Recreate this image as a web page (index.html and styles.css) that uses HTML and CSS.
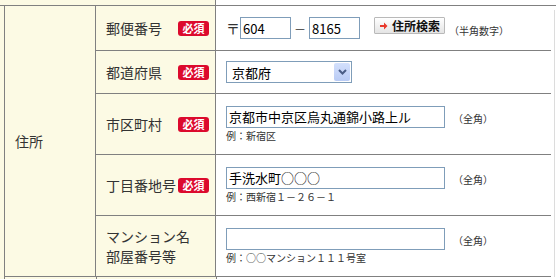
FILE: index.html
```html
<!DOCTYPE html>
<html lang="ja">
  <head>
    <meta charset="UTF-8" />
    <meta name="viewport" content="width=device-width, initial-scale=1.0" />
    <title>住所入力</title>
    <link rel="stylesheet" href="styles.css">
  </head>
  <body>
    <div class="form">
      <div class="prev">
        <div class="prev-head"></div>
        <div class="prev-body"></div>
      </div>

      <div class="addr">
        <div class="group">住所</div>

        <div class="label">郵便番号 <span class="req">必須</span></div>
        <div class="field">
          <span class="zip-mark">〒</span>
          <input type="text" class="input zip" value="604" />
          <span class="dash">－</span>
          <input type="text" class="input zip" value="8165" />
          <button type="button" class="search-btn">
            <svg width="8" height="8" viewBox="0 0 8 8">
              <path d="M0 3h4V0.5L7.5 4 4 7.5V5H0z" fill="#e8392c" />
            </svg>
            住所検索
          </button>
          <span class="note note-low">（半角数字）</span>
        </div>

        <div class="label">都道府県 <span class="req">必須</span></div>
        <div class="field">
          <div class="select">
            <span class="select-text">京都府</span>
            <span class="select-btn">
              <svg width="9" height="6" viewBox="0 0 9 6">
                <path d="M1 1l3.5 3.5L8 1" fill="none" stroke="#4a5d86" stroke-width="2" />
              </svg>
            </span>
          </div>
        </div>

        <div class="label">市区町村 <span class="req">必須</span></div>
        <div class="field">
          <div class="stack">
            <div class="line">
              <input type="text" class="input wide" value="京都市中京区烏丸通錦小路上ル" />
              <span class="note">（全角）</span>
            </div>
            <div class="example">例：新宿区</div>
          </div>
        </div>

        <div class="label">丁目番地号<span class="req">必須</span></div>
        <div class="field">
          <div class="stack">
            <div class="line">
              <input type="text" class="input wide" value="手洗水町○○○" />
              <span class="note">（全角）</span>
            </div>
            <div class="example">例：西新宿１－２６－１</div>
          </div>
        </div>

        <div class="label label-two">マンション名<br />部屋番号等</div>
        <div class="field">
          <div class="stack">
            <div class="line">
              <input type="text" class="input wide" value="" />
              <span class="note">（全角）</span>
            </div>
            <div class="example">例：○○マンション１１１号室</div>
          </div>
        </div>
      </div>

      <div class="next">
        <div class="next-a"></div>
        <div class="next-b"></div>
        <div class="next-c"></div>
      </div>
    </div>
  </body>
</html>
```

FILE: styles.css
```css
body {
  margin: 0;
  background: #fff;
  font-family: "Noto Sans CJK JP", "Noto Sans", sans-serif;
  color: #333;
}
.form {
  width: 556px;
  height: 279px;
  overflow: hidden;
  background:
    linear-gradient(#dcdcdc, #dcdcdc) 554px 10px / 1px 269px no-repeat,
    linear-gradient(to right, #fcfae4 4px, #fff 4px);
}

/* previous row, only its bottom edge shows */
.prev {
  display: flex;
  height: 6px;
  border-bottom: 1px solid #808080;
  box-sizing: border-box;
  width: 556px;
}
.prev-head {
  width: 216px;
  background: #fcfae4;
  border-right: 1px solid #808080;
  box-sizing: border-box;
}
.prev-body {
  flex: 1;
  background: #fff;
}

.addr {
  display: grid;
  grid-template-columns: 91px 120px 335px;
  grid-template-rows: 45px 43px 61px 61px 61px;
  margin-left: 4px;
  border-left: 1px solid #808080;
  width: 547px;
  box-sizing: border-box;
}
.addr > div {
  box-sizing: border-box;
  border-bottom: 1px solid #808080;
}
.group {
  grid-row: 1 / span 5;
  background: #fcfae4;
  border-right: 1px solid #808080;
  display: flex;
  align-items: center;
  padding-left: 10px;
  font-size: 14px;
}
.label {
  background: #fcfae4;
  border-right: 1px solid #808080;
  display: flex;
  align-items: center;
  justify-content: space-between;
  padding: 0 6px 0 10px;
  font-size: 14px;
  white-space: nowrap;
}
.label-two {
  display: block;
  line-height: 20px;
  padding-top: 10px;
}
.req {
  display: inline-block;
  width: 31px;
  height: 15px;
  line-height: 15px;
  border-radius: 3px;
  background: #dc0a2d;
  color: #fff;
  font-size: 11px;
  font-weight: bold;
  text-align: center;
}
.field {
  background: #fff;
  display: flex;
  align-items: center;
  padding-left: 10px;
  font-size: 13px;
}

.input {
  height: 22px;
  box-sizing: border-box;
  border: 1px solid #7f9db9;
  padding: 0 2px;
  font-family: "Noto Sans CJK JP", "Noto Sans", sans-serif;
  font-size: 13px;
  color: #000;
  outline: none;
}
.zip {
  width: 51px;
}
.wide {
  width: 219px;
}
.zip-mark {
  width: 14px;
  font-size: 14px;
}
.dash {
  width: 18px;
  text-align: center;
  font-size: 12px;
}
.search-btn {
  display: flex;
  align-items: center;
  gap: 4px;
  height: 17px;
  width: 71px;
  margin-left: 14px;
  margin-top: -5px;
  padding: 0 0 0 5px;
  box-sizing: border-box;
  border: 1px solid #b9b9b9;
  border-radius: 1px;
  background: linear-gradient(#ffffff, #e4e4e4);
  font-family: "Noto Sans CJK JP", sans-serif;
  font-size: 12px;
  font-weight: bold;
  color: #111;
  cursor: pointer;
}
.note {
  font-size: 10px;
  margin-left: 8px;
  margin-top: 3px;
  color: #333;
}
.note-low {
  margin-left: 4px;
  margin-top: 4px;
}

.select {
  display: flex;
  align-items: center;
  justify-content: space-between;
  width: 126px;
  height: 22px;
  box-sizing: border-box;
  border: 1px solid #7f9db9;
  padding: 1px;
  color: #000;
}
.select-text {
  padding-left: 4px;
}
.select-btn {
  display: flex;
  align-items: center;
  justify-content: center;
  width: 16px;
  height: 18px;
  border-radius: 2px;
  background: linear-gradient(#d3e0fc, #b9cbf5);
}

.stack {
  display: flex;
  flex-direction: column;
}
.line {
  display: flex;
  align-items: center;
}
.example {
  font-size: 10px;
  line-height: 15px;
  color: #333;
}

/* next row, only its top shows */
.next {
  display: flex;
  height: 20px;
  margin-left: 4px;
}
.next-a {
  width: 91px;
  background: #fcfae4;
  border-left: 1px solid #808080;
  border-right: 1px solid #808080;
}
.next-b {
  width: 119px;
  background: #fcfae4;
  border-right: 1px solid #808080;
}
.next-c {
  flex: 1;
  background: #fff;
}
```
